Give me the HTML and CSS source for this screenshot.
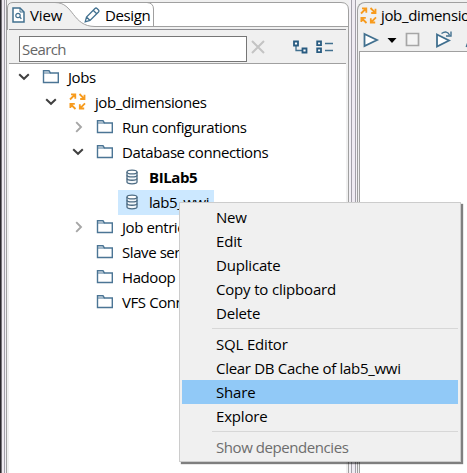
FILE: index.html
```
<!DOCTYPE html>
<html lang="en">
<head>
<meta charset="utf-8">
<title>Job explorer</title>
<link rel="stylesheet" href="styles.css">
</head>
<body>
<svg class="defs" width="0" height="0">
  <symbol id="folder" viewBox="0 0 18 16"><path d="M1.5 13.5V1.8H7L8.4 4H16.3V13.5Z" fill="#fff" stroke="#4b7595" stroke-width="1.4"/><path d="M2 4H8.5" stroke="#4b7595"/></symbol>
  <symbol id="db" viewBox="0 0 12 16"><path d="M1 3V13C1 15.4 11 15.4 11 13V3" fill="#f4f8fb" stroke="#4b6a82" stroke-width="1.3"/><ellipse cx="6" cy="3" rx="5" ry="1.9" fill="#fff" stroke="#4b6a82" stroke-width="1.3"/><path d="M1 6.2C1 8.4 11 8.4 11 6.2M1 9.6C1 11.8 11 11.8 11 9.6" fill="none" stroke="#4b6a82" stroke-width="1.3"/></symbol>
  <symbol id="down" viewBox="0 0 12 8"><path d="M1.2 1.2L6 5.8L10.8 1.2" fill="none" stroke="#404040" stroke-width="2"/></symbol>
  <symbol id="right" viewBox="0 0 8 12"><path d="M1.2 1.2L6 6L1.2 10.8" fill="none" stroke="#a6a6a6" stroke-width="1.9"/></symbol>
  <symbol id="job" viewBox="0 0 17 17"><g fill="none" stroke="#f79b1e" stroke-width="1.8"><path d="M1 6.5L6 1.5M2 1.3H6.3V5.7M10.5 1L15.3 5.8M15.5 1.7V6H11.2M16 10.3L11 15.3M15.2 15.5H10.8V11.2M6.5 16L1.5 11M1.4 15V10.8H5.8"/></g></symbol>
</svg>
<div class="window">
  <div class="edge"></div>
  <section class="explorer">
    <div class="tabs">
      <svg class="tab-shape" width="342" height="30" viewBox="0 0 342 30">
        <path d="M0 30V8Q0 2.5 6 2.5H334Q341.5 2.5 341.5 10V30Z" fill="#fff"/>
        <path d="M0 26V8Q0 2.5 6 2.5H48C67 2.5 65 26.5 88 26.5H341V30H0Z" fill="#f0f0f0"/>
        <path d="M.5 30V8Q.5 2.5 6 2.5H334Q341.5 2.5 341.5 10V30M48 2.5C67 2.5 65 26.5 88 26.5H341.5M140 2.5Q146.5 3 146.5 9V26" fill="none" stroke="#a0a0a0"/>
        <path d="M2 29.5H339" stroke="#8e8e93"/>
      </svg>
      <svg class="view-icon" width="13" height="16" viewBox="0 0 13 16"><path d="M1 1H8L12 5V15H1Z" fill="#fff" stroke="#41708f" stroke-width="1.5"/><path d="M8 1V5H12" fill="none" stroke="#41708f"/><circle cx="6" cy="8.5" r="2.2" fill="none" stroke="#41708f" stroke-width="1.2"/><path d="M7.6 10L9.4 11.8" stroke="#41708f" stroke-width="1.3"/></svg>
      <span class="t view">View</span>
      <svg class="pen" width="16" height="16" viewBox="0 0 16 16"><path d="M1.2 14.8L2.5 10L11 1.5Q12 .6 13 1.5L14.5 3Q15.4 4 14.5 5L6 13.5ZM2.5 10L6 13.5M9.2 3.3L12.7 6.8" fill="#fff" stroke="#41708f" stroke-width="1.3"/></svg>
      <span class="t design">Design</span>
    </div>
    <div class="search-bar">
      <div class="search"><span class="t placeholder">Search</span></div>
      <svg class="clear" width="14" height="14" viewBox="0 0 14 14"><path d="M1 1L13 13M13 1L1 13" stroke="#c4c4c4" stroke-width="2"/></svg>
      <svg class="expand" width="15" height="14" viewBox="0 0 15 14"><path d="M3 5V10.5H9" fill="none" stroke="#41708f" stroke-width="1.3"/><path d="M1 1.5H5V5.5H1ZM9.5 8.5H13.5V12.5H9.5Z" fill="#fff" stroke="#285b80" stroke-width="1.8"/></svg>
      <svg class="collapse" width="17" height="14" viewBox="0 0 17 14"><path d="M1.2 1.5H5V5.2H1.2ZM1.2 8.5H5V12.2H1.2Z" fill="#fff" stroke="#285b80" stroke-width="1.8"/><path d="M9 3.5H17M9 10.5H17" stroke="#41708f" stroke-width="1.4"/></svg>
    </div>
    <div class="tree">
      <div class="row l0"><svg class="tw"><use href="#down"/></svg><svg class="fo"><use href="#folder"/></svg><span class="t">Jobs</span></div>
      <div class="row l1"><svg class="tw"><use href="#down"/></svg><svg class="jo"><use href="#job"/></svg><span class="t">job_dimensiones</span></div>
      <div class="row l2"><svg class="tr"><use href="#right"/></svg><svg class="fo"><use href="#folder"/></svg><span class="t">Run configurations</span></div>
      <div class="row l2"><svg class="tw"><use href="#down"/></svg><svg class="fo"><use href="#folder"/></svg><span class="t">Database connections</span></div>
      <div class="row l3"><svg class="db"><use href="#db"/></svg><span class="t bilab">BILab5</span></div>
      <div class="row l3 selected"><svg class="db"><use href="#db"/></svg><span class="t">lab5_wwi</span></div>
      <div class="row l2"><svg class="tr"><use href="#right"/></svg><svg class="fo"><use href="#folder"/></svg><span class="t">Job entries</span></div>
      <div class="row l2"><span class="tw"></span><svg class="fo"><use href="#folder"/></svg><span class="t">Slave server</span></div>
      <div class="row l2"><span class="tw"></span><svg class="fo"><use href="#folder"/></svg><span class="t hadoop">Hadoop</span></div>
      <div class="row l2"><span class="tw"></span><svg class="fo"><use href="#folder"/></svg><span class="t">VFS Conn</span></div>
    </div>
  </section>
  <div class="sash"></div>
  <section class="editor">
    <div class="editor-tab"><svg class="jo"><use href="#job"/></svg><span class="t">job_dimensiones</span></div>
    <div class="toolbar">
      <svg width="110" height="24" viewBox="0 0 110 24">
        <path d="M6.5 7L19 13L6.5 19Z" fill="#fff" stroke="#41708f" stroke-width="1.8"/>
        <path d="M29.5 11H38.5L34 16Z" fill="#000"/>
        <path d="M48.5 6.5H60.5V18.5H48.5Z" fill="#f4f4f4" stroke="#a6a6a6" stroke-width="1.7"/>
        <path d="M79 7.5L91 13.5L79 19.5Z" fill="#fff" stroke="#41708f" stroke-width="1.8"/>
        <path d="M83.5 6.5Q89 3 91.5 8M93 4.5V9H88" fill="none" stroke="#41708f" stroke-width="1.4"/>
        <path d="M108.5 20L110 16" stroke="#41708f" stroke-width="2"/>
      </svg>
    </div>
    <div class="canvas"></div>
  </section>
</div>
<div class="menu">
  <div class="item"><span class="t">New</span></div>
  <div class="item"><span class="t">Edit</span></div>
  <div class="item"><span class="t">Duplicate</span></div>
  <div class="item"><span class="t">Copy to clipboard</span></div>
  <div class="item"><span class="t">Delete</span></div>
  <div class="sep"></div>
  <div class="item"><span class="t">SQL Editor</span></div>
  <div class="item"><span class="t long">Clear DB Cache of lab5_wwi</span></div>
  <div class="item active"><span class="t">Share</span></div>
  <div class="item"><span class="t">Explore</span></div>
  <div class="sep"></div>
  <div class="item disabled"><span class="t deps">Show dependencies</span></div>
</div>
</body>
</html>
```
FILE: styles.css
```
* { box-sizing: border-box; }
body { margin: 0; width: 467px; height: 473px; overflow: hidden; background: #f0f0f0; font: 15px/24px "Open Sans", "Noto Sans", sans-serif; color: #000; }
svg { display: block; flex: none; }
.defs { position: absolute; }
.t { white-space: nowrap; }
.window { display: flex; height: 473px; }
.edge { flex: none; width: 7px; background: linear-gradient(90deg, #29272b 0 1px, #77747a 1px 2px, #eeeaf0 2px 4px, #a3a0a9 4px 5px, #f2f0f5 5px 6px, #a0a0a0 6px 7px); }
.explorer { flex: none; width: 342px; display: flex; flex-direction: column; border-right: 1px solid #a0a0a0; }
.tabs { display: grid; grid-template-columns: 5px 13px 5px 54px 16px 5px 1fr; height: 30px; align-items: center; margin-right: -1px; background: #f0f0f0; letter-spacing: -.4px; }
.tabs > * { grid-row: 1; }
.tab-shape { grid-column: 1 / -1; align-self: start; }
.view-icon { grid-column: 2; }
.view { grid-column: 4; }
.view { letter-spacing: -.1px; }
.pen { grid-column: 5; }
.design { grid-column: 7; }
.search-bar { flex: none; height: 34px; margin: 0 2px; border-bottom: 1px solid #a0a0a0; display: flex; align-items: center; padding-left: 10px; background: #f0f0f0; }
.search { width: 228px; height: 26px; margin-top: 5px; border: 1px solid #767676; background: #fff; color: #666; padding-left: 2px; line-height: 25px; letter-spacing: -.6px; }
.clear { margin-left: 4px; }
.expand { margin-left: 28px; }
.collapse { margin-left: 8px; }
.tree { flex: 1; margin: 0 2px; padding-top: 1px; background: #fff; letter-spacing: -.42px; }
.row { height: 25px; display: flex; align-items: center; padding-bottom: 2px; }
.l0 { padding-left: 9px; }
.l1 { padding-left: 36px; }
.l2 { padding-left: 63px; }
.l3 { padding-left: 8px; margin-left: 109px; }
.selected { background: #cce8ff; width: 96px; }
.tw { width: 12px; height: 8px; margin-right: 12px; }
.tr { width: 8px; height: 12px; margin: 0 13px 0 3px; }
.fo { width: 18px; height: 16px; margin-right: 8px; }
.l1 .tw { margin-right: 12px; }
.jo { width: 17px; height: 17px; margin-right: 9px; }
.db { width: 12px; height: 16px; margin-right: 11px; }
.bilab { font-weight: 700; }
.sash { flex: none; width: 8px; background: linear-gradient(90deg, #f2f0f5 0 2px, #a3a0a9 2px 3px, #efebf2 3px 6px, #a3a0a9 6px 7px, #f4f2f6 7px 8px); }
.editor { flex: 1; min-width: 0; display: flex; flex-direction: column; overflow: hidden; border: 1px solid #a0a0a0; border-width: 1px 0 0 1px; border-radius: 8px 0 0 0; margin-top: 2px; background: #f0f0f0; }
.editor-tab { height: 25px; display: flex; align-items: center; padding: 0 0 1px 2px; letter-spacing: -.35px; }
.editor-tab .jo { margin-right: 4px; }
.toolbar { height: 23px; }
.toolbar svg { margin-top: -1px; }
.canvas { flex: 1; margin-left: 1px; border: 1px solid #a0a0a0; border-width: 1px 0 0 1px; background: #fff; }
.menu { position: absolute; left: 179px; top: 202px; width: 282px; height: 260px; padding: 2px; border: 1px solid #ccc; background: #f0f0f0; box-shadow: 2px 2px 1px rgba(0,0,0,.5); letter-spacing: -.18px; }
.item { height: 24px; padding-left: 34px; }
.long { letter-spacing: -.3px; }
.deps { letter-spacing: -.43px; }
.active { background: #91c9f7; }
.disabled { color: #6d6d6d; }
.sep { height: 7px; margin-left: 30px; background: linear-gradient(#f0f0f0 0 3px, #d7d7d7 3px 4px, #f0f0f0 4px); }
```
